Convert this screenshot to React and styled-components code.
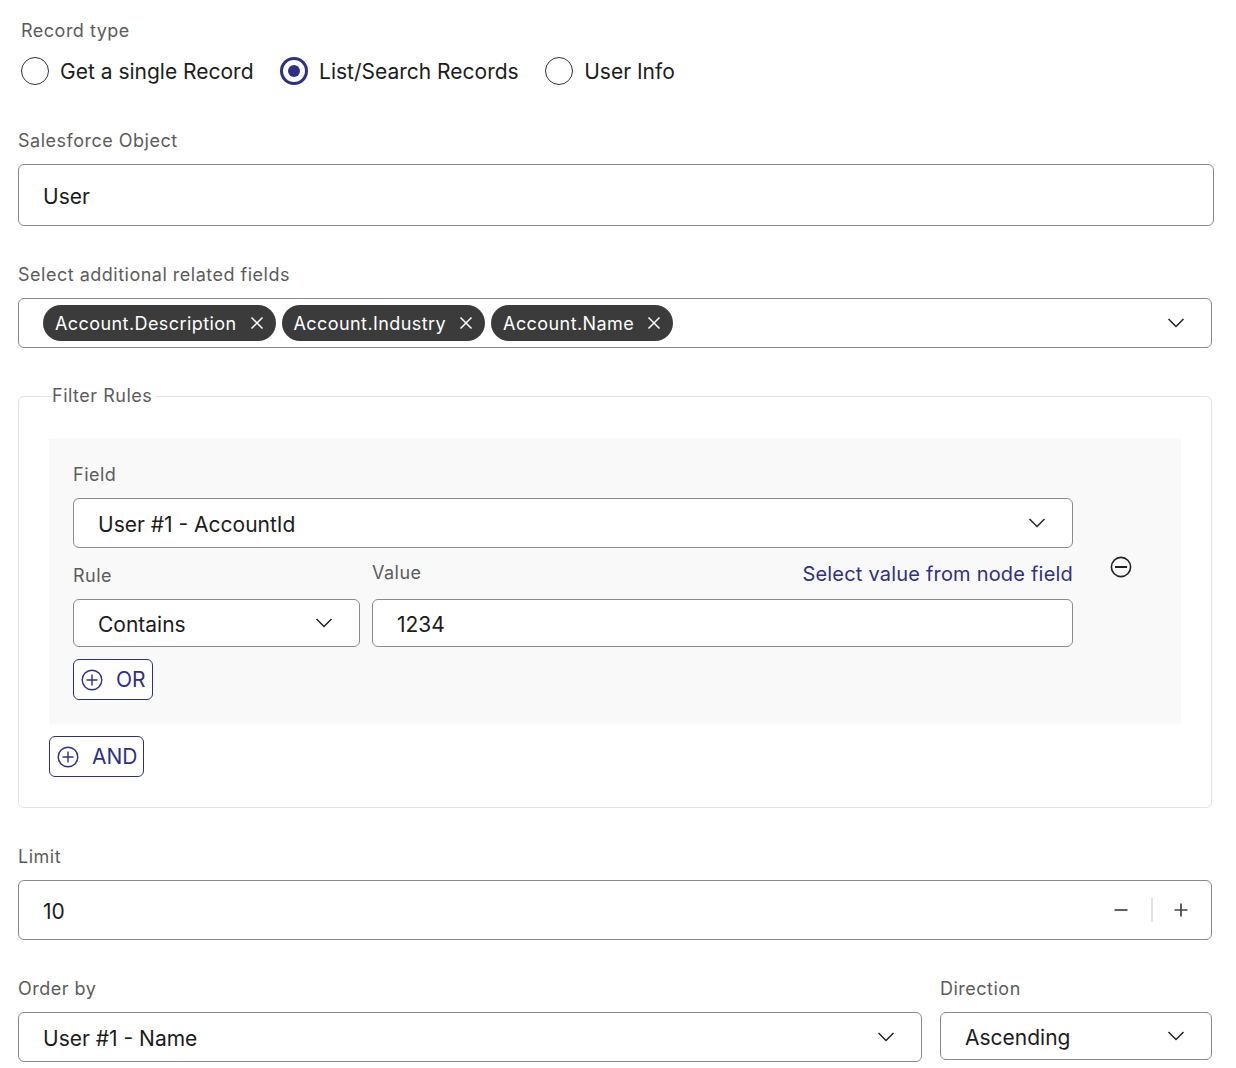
import React from "react";
import styled, { createGlobalStyle } from "styled-components";

const Global = createGlobalStyle`
  html, body { margin: 0; padding: 0; background: #fff; }
  body { font-family: Inter, "Liberation Sans", sans-serif; color: #1c1c1c; }
`;
const Page = styled.div`
  width: 1236px;
  height: 1068px;
  overflow: hidden;
  box-sizing: border-box;
  padding: 20px 24px 0 18px;
  display: flex;
  flex-direction: column;
`;
const Label = styled.div`
  font-size: 18px;
  line-height: 22px;
  letter-spacing: 0.5px;
  color: #5c5c5c;
  margin-left: ${p => p.$indent || 0}px;
  margin-top: ${p => p.$top || 0}px;
  margin-bottom: ${p => p.$gap ?? 12}px;
`;
const RadioRow = styled.div`
  display: flex;
  align-items: center;
  padding-left: 3px;
  height: 28px;
  margin-bottom: 45px;
`;
const RadioItem = styled.div`
  display: flex;
  align-items: center;
  gap: 11px;
  margin-right: 26.5px;
  font-size: 21px;
`;
const RadioDot = styled.span`
  box-sizing: border-box;
  width: 28px;
  height: 28px;
  border-radius: 50%;
  border: ${p => (p.$on ? "3px solid #2e3085" : "1.5px solid #333")};
  background: #fff;
  display: flex;
  align-items: center;
  justify-content: center;
  &::after {
    content: "";
    display: ${p => (p.$on ? "block" : "none")};
    width: 12px;
    height: 12px;
    border-radius: 50%;
    background: #2e3085;
  }
`;
const Field = styled.div`
  box-sizing: border-box;
  width: ${p => (p.$w ? `${p.$w}px` : "100%")};
  height: ${p => p.$h}px;
  flex: none;
  border: 1.5px solid #8a8a8a;
  border-radius: 6px;
  background: #fff;
  display: flex;
  align-items: center;
  padding: 0 24px;
  font-size: 21px;
  margin-bottom: ${p => p.$mb || 0}px;
`;
const Value = styled.span`
  flex: 1;
  padding-top: 2px;
`;
const Chips = styled.div`
  flex: 1;
  display: flex;
  gap: 6px;
`;
const Chip = styled.span`
  display: flex;
  align-items: center;
  gap: 13px;
  height: 36px;
  padding: 0 12px;
  border-radius: 18px;
  background: #3b3b3b;
  color: #fff;
  font-size: 18px;
  letter-spacing: 0.42px;
`;
const Fieldset = styled.fieldset`
  box-sizing: border-box;
  width: 1194px;
  height: 423px;
  margin: 37px 0 38px;
  padding: 31px 30px 0;
  border: 1.5px solid #e2e2e2;
  border-radius: 6px;
`;
const Legend = styled.legend`
  margin-left: 3px;
  padding: 0 4px 0 0;
  font-size: 18px;
  line-height: 22px;
  letter-spacing: 0.5px;
  color: #5c5c5c;
`;
const RulePanel = styled.div`
  background: #f9f9f9;
  height: 286px;
  box-sizing: border-box;
  padding: 25px 24px 0;
  margin-bottom: 12px;
  display: flex;
  align-items: flex-start;
`;
const RuleBody = styled.div`
  width: 1000px;
  flex: none;
`;
const RuleGrid = styled.div`
  display: grid;
  grid-template-columns: 287px 701px;
  column-gap: 12px;
`;
const ValueHead = styled.div`
  display: flex;
  justify-content: space-between;
  align-items: flex-start;
  height: 51px;
`;
const RuleHead = styled.div`
  height: 51px;
  padding-top: 16px;
  box-sizing: border-box;
`;
const LinkText = styled.span`
  color: #2e3085;
  font-size: 20px;
  line-height: 24px;
  letter-spacing: 0.2px;
  margin-top: 14px;
`;
const RemoveIcon = styled.svg`
  width: 22px;
  height: 22px;
  margin: 93px 0 0 37px;
  flex: none;
`;
const OutlineButton = styled.button`
  display: flex;
  align-items: center;
  gap: 13px;
  box-sizing: border-box;
  height: 41px;
  padding: 0 6px 0 7px;
  margin-top: ${p => p.$mt || 0}px;
  border: 1.5px solid #2e3085;
  border-radius: 6px;
  background: #fff;
  color: #2e3085;
  font-family: inherit;
  font-size: 21px;
`;
const NumberControls = styled.div`
  display: flex;
  align-items: center;
  margin-right: -1px;
`;
const Divider = styled.span`
  width: 2px;
  height: 24px;
  background: #e2e2e2;
  margin: 0 21px 0 23px;
`;
const OrderRow = styled.div`
  display: flex;
  gap: 18px;
  width: 1194px;
`;
const OrderCol = styled.div`
  width: ${p => p.$w}px;
  flex: none;
`;
const ChevronIcon = styled.svg`
  width: 18px;
  height: 18px;
  margin-right: 2px;
  flex: none;
`;

const Chevron = () => (
  <ChevronIcon viewBox="0 0 18 18" fill="none" stroke="#222" strokeWidth="1.5">
    <path d="M1.5 5 L9 12.5 L16.5 5" />
  </ChevronIcon>
);
const Close = () => (
  <svg width="14" height="14" viewBox="0 0 14 14" fill="none" stroke="#fff" strokeWidth="1.5">
    <path d="M1.5 1.5 L12.5 12.5 M12.5 1.5 L1.5 12.5" />
  </svg>
);
const PlusCircle = () => (
  <svg width="22" height="22" viewBox="0 0 22 22" fill="none" stroke="#2e3085" strokeWidth="1.4">
    <circle cx="11" cy="11" r="9.8" />
    <path d="M11 5.5 V16.5 M5.5 11 H16.5" />
  </svg>
);
const SmallLine = ({ plus }) => (
  <svg width="14" height="14" viewBox="0 0 14 14" fill="none" stroke="#444" strokeWidth="1.7">
    <path d={plus ? "M0.5 7 H13.5 M7 0.5 V13.5" : "M0.5 7 H13.5"} />
  </svg>
);

export default function App() {
  return (
    <Page>
      <Global />
      <Label $indent={3} $gap={15}>Record type</Label>
      <RadioRow>
        <RadioItem><RadioDot />Get a single Record</RadioItem>
        <RadioItem><RadioDot $on />List/Search Records</RadioItem>
        <RadioItem><RadioDot />User Info</RadioItem>
      </RadioRow>
      <Label>Salesforce Object</Label>
      <Field $w={1196} $h={62} $mb={38}><Value>User</Value></Field>
      <Label>Select additional related fields</Label>
      <Field $h={50}>
        <Chips>
          <Chip>Account.Description <Close /></Chip>
          <Chip>Account.Industry <Close /></Chip>
          <Chip>Account.Name <Close /></Chip>
        </Chips>
        <Chevron />
      </Field>
      <Fieldset>
        <Legend>Filter Rules</Legend>
        <RulePanel>
          <RuleBody>
            <Label $top={1}>Field</Label>
            <Field $h={50}><Value>User #1 - AccountId</Value><Chevron /></Field>
            <RuleGrid>
              <RuleHead><Label $top={1}>Rule</Label></RuleHead>
              <ValueHead>
                <Label $top={14}>Value</Label>
                <LinkText>Select value from node field</LinkText>
              </ValueHead>
              <Field $h={48}><Value>Contains</Value><Chevron /></Field>
              <Field $h={48}><Value>1234</Value></Field>
            </RuleGrid>
            <OutlineButton $mt={12}><PlusCircle />OR</OutlineButton>
          </RuleBody>
          <RemoveIcon viewBox="0 0 22 22" fill="none" stroke="#222" strokeWidth="1.6">
            <circle cx="11" cy="11" r="9.6" />
            <path d="M5 11 H17" strokeWidth="2" />
          </RemoveIcon>
        </RulePanel>
        <OutlineButton><PlusCircle />AND</OutlineButton>
      </Fieldset>
      <Label>Limit</Label>
      <Field $h={60} $mb={38}>
        <Value>10</Value>
        <NumberControls>
          <SmallLine />
          <Divider />
          <SmallLine plus />
        </NumberControls>
      </Field>
      <OrderRow>
        <OrderCol $w={904}>
          <Label>Order by</Label>
          <Field $h={50}><Value>User #1 - Name</Value><Chevron /></Field>
        </OrderCol>
        <OrderCol $w={272}>
          <Label>Direction</Label>
          <Field $h={48}><Value>Ascending</Value><Chevron /></Field>
        </OrderCol>
      </OrderRow>
    </Page>
  );
}
